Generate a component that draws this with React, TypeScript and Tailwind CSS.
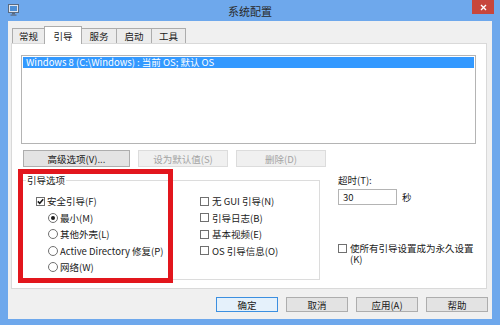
import React from "react";

function Check({ checked = false }: { checked?: boolean }) {
  return (
    <span className="w-[9px] h-[9px] border border-[#707070] bg-white flex items-center justify-center shrink-0">
      {checked && (
        <svg width="7" height="7" viewBox="0 0 7 7">
          <path d="M0.8 3.4 L2.7 5.3 L6.2 1.2" stroke="#1a1a1a" strokeWidth="1.5" fill="none" />
        </svg>
      )}
    </span>
  );
}

function Radio({ on = false }: { on?: boolean }) {
  return (
    <span className="w-[10px] h-[10px] rounded-full border border-[#707070] bg-white flex items-center justify-center shrink-0">
      {on && <span className="w-[4px] h-[4px] rounded-full bg-[#1a1a1a]" />}
    </span>
  );
}

function Btn({ label, disabled = false, def = false, w = "w-[62px]" }: { label: string; disabled?: boolean; def?: boolean; w?: string }) {
  const cls = disabled
    ? "bg-[#f0f0f0] border-[#dcdcdc] text-[#a3a3a3]"
    : def
    ? "bg-[#e5f1fb] border-[#3c8fe0] text-[#1a1a1a]"
    : "bg-[#e3e3e3] border-[#adadad] text-[#1a1a1a]";
  return (
    <div className={`${w} h-full border flex items-center justify-center ${cls}`}>{label}</div>
  );
}

export default function App() {
  return (
    <div className="relative w-[500px] h-[325px] bg-[#6ea8ec] flex flex-col text-[9.5px] leading-[12px] text-[#1a1a1a] font-['Noto_Sans_CJK_SC','Noto_Sans',sans-serif] overflow-hidden">
      {/* 标题栏 */}
      <div className="relative h-[21px] flex items-center justify-center shrink-0">
        <svg className="absolute left-[8px] top-[4px]" width="11" height="12" viewBox="0 0 11 12">
          <rect x="0.5" y="0.5" width="10" height="8" fill="#dfe6f0" stroke="#5a6b82" />
          <rect x="2" y="2" width="7" height="5" fill="#4d8fd6" />
          <rect x="4" y="9" width="3" height="1.5" fill="#5a6b82" />
          <rect x="2.5" y="10.5" width="6" height="1.2" fill="#5a6b82" />
        </svg>
        <span className="text-[11px] leading-[14px] text-[#2a2a2a]">系统配置</span>
        <div className="absolute right-[6px] top-0 w-[22px] h-[14px] bg-[#c7463c] flex items-center justify-center">
          <svg width="7" height="7" viewBox="0 0 7 7">
            <path d="M1 1 L6 6 M6 1 L1 6" stroke="#fff" strokeWidth="1.4" />
          </svg>
        </div>
      </div>

      {/* 客户区 */}
      <div className="mx-[8px] h-[298px] bg-[#f0f0f0] flex flex-col shrink-0">
        {/* 选项卡 */}
        <div className="h-[22px] pl-[4px] flex items-end shrink-0">
          <div className="w-[33px] h-[15px] border border-b-0 border-[#acacac] bg-[#ececec] flex items-center justify-center">常规</div>
          <div className="relative z-10 -ml-[1px] -mb-[1px] w-[38px] h-[18px] border border-b-0 border-[#acacac] bg-white flex items-center justify-center">引导</div>
          <div className="-ml-[1px] w-[36px] h-[15px] border border-b-0 border-[#acacac] bg-[#ececec] flex items-center justify-center">服务</div>
          <div className="-ml-[1px] w-[36px] h-[15px] border border-b-0 border-[#acacac] bg-[#ececec] flex items-center justify-center">启动</div>
          <div className="-ml-[1px] w-[35px] h-[15px] border border-b-0 border-[#acacac] bg-[#ececec] flex items-center justify-center">工具</div>
        </div>

        {/* 面板 */}
        <div className="ml-[3px] mr-[5px] h-[246px] bg-white border border-[#d9d9d9] pl-[9px] pr-[10px] pt-[11px] flex flex-col shrink-0">
          <div className="h-[89px] border border-[#b4b4b4] bg-white p-[1px]">
            <div className="h-[11px] bg-[#3399ff] text-white leading-[11px] pl-[3px]">Windows 8 (C:\Windows) : 当前 OS; 默认 OS</div>
          </div>

          <div className="mt-[6px] h-[17px] flex pl-[2px] gap-[8px]">
            <Btn label="高级选项(V)..." w="w-[107px]" />
            <Btn label="设为默认值(S)" w="w-[90px]" disabled />
            <Btn label="删除(D)" w="w-[90px]" disabled />
          </div>

          <div className="mt-[7px] flex">
            <fieldset className="w-[306px] h-[106px] border border-[#dcdcdc]">
              <legend className="ml-[4px] px-[1px] leading-[12px]">引导选项</legend>
              <div className="pt-[7px] flex">
                <div className="w-[178px] pl-[14px] flex flex-col">
                  <div className="h-[16.5px] flex items-center gap-[2px]"><Check checked /><span>安全引导(F)</span></div>
                  <div className="h-[16.5px] pl-[12px] flex items-center gap-[2px]"><Radio on /><span>最小(M)</span></div>
                  <div className="h-[16.5px] pl-[12px] flex items-center gap-[2px]"><Radio /><span>其他外壳(L)</span></div>
                  <div className="h-[16.5px] pl-[12px] flex items-center gap-[2px]"><Radio /><span>Active Directory 修复(P)</span></div>
                  <div className="h-[16.5px] pl-[12px] flex items-center gap-[2px]"><Radio /><span>网络(W)</span></div>
                </div>
                <div className="flex flex-col">
                  <div className="h-[16.5px] flex items-center gap-[3px]"><Check /><span>无 GUI 引导(N)</span></div>
                  <div className="h-[16.5px] flex items-center gap-[3px]"><Check /><span>引导日志(B)</span></div>
                  <div className="h-[16.5px] flex items-center gap-[3px]"><Check /><span>基本视频(E)</span></div>
                  <div className="h-[16.5px] flex items-center gap-[3px]"><Check /><span>OS 引导信息(O)</span></div>
                </div>
              </div>
            </fieldset>

            <div className="ml-[18px] flex flex-col">
              <div className="leading-[12px]">超时(T):</div>
              <div className="mt-[3px] flex items-center">
                <div className="w-[59px] h-[16px] border border-[#b4b4b4] bg-white pl-[4px] flex items-center">30</div>
                <span className="ml-[5px]">秒</span>
              </div>
              <div className="mt-[38px] flex items-start gap-[3px]">
                <div className="mt-[1px]"><Check /></div>
                <div className="w-[126px] leading-[11px]">使所有引导设置成为永久设置(K)</div>
              </div>
            </div>
          </div>
        </div>

        {/* 底部按钮 */}
        <div className="mt-[8px] h-[15px] flex justify-end gap-[8px] pr-[4px]">
          <Btn label="确定" def />
          <Btn label="取消" />
          <Btn label="应用(A)" />
          <Btn label="帮助" />
        </div>
      </div>

      {/* 红色标注框 */}
      <div className="absolute left-[18px] top-[169px] w-[155px] h-[114px] border-[5px] border-[#e2161d]" />
    </div>
  );
}
